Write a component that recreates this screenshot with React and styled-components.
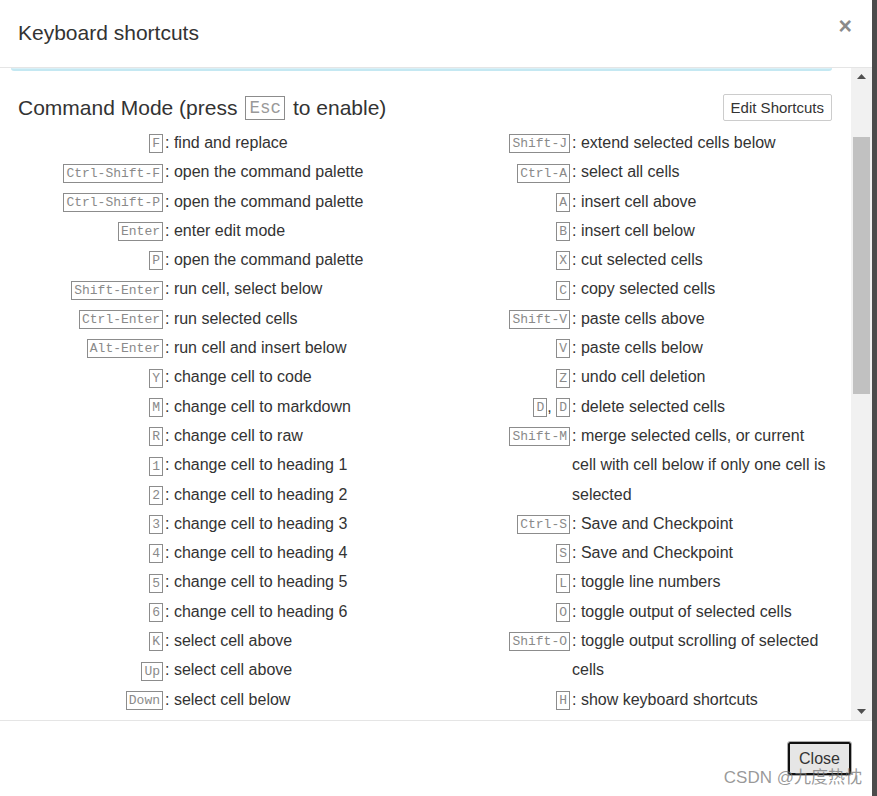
import React from 'react';
import styled, { createGlobalStyle } from 'styled-components';

const GlobalStyle = createGlobalStyle`
  *, *::before, *::after {
    box-sizing: border-box;
  }
  html, body {
    margin: 0;
    padding: 0;
    background: #4b4b4b;
  }
  body {
    font-family: "Liberation Sans", Arial, sans-serif;
    color: #333;
  }
`;

const Page = styled.div`
  width: 877px;
  height: 796px;
  display: flex;
  overflow: hidden;
`;

const Dialog = styled.div`
  width: 872px;
  height: 796px;
  background: #fff;
  display: flex;
  flex-direction: column;
`;

const Header = styled.div`
  height: 68px;
  border-bottom: 1px solid #e5e5e5;
  display: flex;
  align-items: center;
  justify-content: space-between;
  padding: 0 18px;
  flex: none;
`;

const Title = styled.h4`
  margin: 0 0 1px;
  font-size: 21px;
  font-weight: normal;
  color: #333;
`;

const CloseX = styled.span`
  font-size: 23px;
  font-weight: bold;
  color: #8a8a8a;
  margin-right: 2px;
  margin-top: -14px;
`;

const BodyRow = styled.div`
  flex: 1;
  display: flex;
  min-height: 0;
`;

const Content = styled.div`
  flex: 1;
  overflow: hidden;
  padding: 0 19px 0 18px;
`;

const AlertEdge = styled.div`
  height: 3px;
  margin: 0 0 0 -7px;
  background: #d9f0f7;
  border-bottom: 2px solid #c4e8f2;
  border-radius: 0 0 3px 3px;
`;

const ModeBar = styled.div`
  display: flex;
  align-items: center;
  justify-content: space-between;
  height: 27px;
  margin-top: 23px;
`;

const ModeTitle = styled.h4`
  margin: 0;
  font-size: 21px;
  font-weight: normal;
  color: #333;
  display: flex;
  align-items: center;
  gap: 8px;
`;

const EscKey = styled.kbd`
  display: inline-block;
  border: 1px solid #8c8c8c;
  padding: 0 3px;
  font-family: "Liberation Mono", "Courier New", monospace;
  font-size: 17.5px;
  line-height: 22px;
  color: #999;
`;

const EditButton = styled.button`
  height: 27px;
  padding: 0 7px;
  background: #fff;
  border: 1px solid #ccc;
  border-radius: 2px;
  font-family: "Liberation Sans", Arial, sans-serif;
  font-size: 15px;
  color: #333;
`;

const Columns = styled.div`
  display: grid;
  grid-template-columns: 407px 1fr;
  margin-top: 7px;
`;

const Column = styled.div`
  display: flex;
  flex-direction: column;
`;

const Line = styled.div`
  display: flex;
  font-size: 16px;
  line-height: 29.3px;
`;

const Keys = styled.span`
  width: 145px;
  flex: none;
  text-align: right;
  color: #333;
`;

const Kbd = styled.kbd`
  display: inline-block;
  border: 1px solid #8c8c8c;
  padding: 0 2px;
  font-family: "Liberation Mono", "Courier New", monospace;
  font-size: 13px;
  line-height: 17px;
  color: #8a8a8a;
  vertical-align: middle;
`;

const Descr = styled.span`
  flex: 1;
  padding-left: 2px;
`;

const Scrollbar = styled.div`
  width: 21px;
  flex: none;
  background: #f1f1f1;
  display: flex;
  flex-direction: column;
  align-items: center;
`;

const Arrow = styled.div`
  height: 17px;
  display: flex;
  align-items: center;
  justify-content: center;
  width: 100%;
`;

const Track = styled.div`
  flex: 1;
  width: 100%;
  display: flex;
  flex-direction: column;
  padding-top: 52px;
`;

const Thumb = styled.div`
  height: 257px;
  margin-left: 2px;
  width: 17px;
  background: #c1c1c1;
`;

const Footer = styled.div`
  position: relative;
  height: 76px;
  border-top: 1px solid #e5e5e5;
  display: flex;
  justify-content: flex-end;
  align-items: flex-start;
  padding: 20px 20px 0 0;
  flex: none;
`;

const CloseButton = styled.button`
  width: 65px;
  height: 35px;
  background: #e6e6e6;
  border: 1px solid #adadad;
  border-radius: 3px;
  box-shadow: inset 0 0 0 2px #111;
  font-family: "Liberation Sans", Arial, sans-serif;
  font-size: 16px;
  color: #333;
`;

const Watermark = styled.span`
  position: absolute;
  right: 10px;
  bottom: 8px;
  font-family: "Liberation Sans", "Noto Sans CJK SC", sans-serif;
  font-size: 17px;
  color: rgba(120, 120, 120, 0.75);
  pointer-events: none;
`;

const left = [
  [['F'], 'find and replace'],
  [['Ctrl-Shift-F'], 'open the command palette'],
  [['Ctrl-Shift-P'], 'open the command palette'],
  [['Enter'], 'enter edit mode'],
  [['P'], 'open the command palette'],
  [['Shift-Enter'], 'run cell, select below'],
  [['Ctrl-Enter'], 'run selected cells'],
  [['Alt-Enter'], 'run cell and insert below'],
  [['Y'], 'change cell to code'],
  [['M'], 'change cell to markdown'],
  [['R'], 'change cell to raw'],
  [['1'], 'change cell to heading 1'],
  [['2'], 'change cell to heading 2'],
  [['3'], 'change cell to heading 3'],
  [['4'], 'change cell to heading 4'],
  [['5'], 'change cell to heading 5'],
  [['6'], 'change cell to heading 6'],
  [['K'], 'select cell above'],
  [['Up'], 'select cell above'],
  [['Down'], 'select cell below'],
  [['J'], 'select cell below'],
  [['Shift-K'], 'extend selected cells above'],
];

const right = [
  [['Shift-J'], 'extend selected cells below'],
  [['Ctrl-A'], 'select all cells'],
  [['A'], 'insert cell above'],
  [['B'], 'insert cell below'],
  [['X'], 'cut selected cells'],
  [['C'], 'copy selected cells'],
  [['Shift-V'], 'paste cells above'],
  [['V'], 'paste cells below'],
  [['Z'], 'undo cell deletion'],
  [['D', 'D'], 'delete selected cells'],
  [['Shift-M'], 'merge selected cells, or current cell with cell below if only one cell is selected'],
  [['Ctrl-S'], 'Save and Checkpoint'],
  [['S'], 'Save and Checkpoint'],
  [['L'], 'toggle line numbers'],
  [['O'], 'toggle output of selected cells'],
  [['Shift-O'], 'toggle output scrolling of selected cells'],
  [['H'], 'show keyboard shortcuts'],
  [['I', 'I'], 'interrupt the kernel'],
  [['0', '0'], 'restart the kernel'],
];

const Shortcut = ({ keys, text }) => (
  <Line>
    <Keys>
      {keys.map((k, i) => (
        <React.Fragment key={i}>
          {i > 0 && ', '}
          <Kbd>{k}</Kbd>
        </React.Fragment>
      ))}
    </Keys>
    <Descr>: {text}</Descr>
  </Line>
);

const App = () => (
  <Page>
    <GlobalStyle />
    <Dialog>
      <Header>
        <Title>Keyboard shortcuts</Title>
        <CloseX>×</CloseX>
      </Header>
      <BodyRow>
        <Content>
          <AlertEdge />
          <ModeBar>
            <ModeTitle>
              <span>Command Mode (press</span>
              <EscKey>Esc</EscKey>
              <span>to enable)</span>
            </ModeTitle>
            <EditButton>Edit Shortcuts</EditButton>
          </ModeBar>
          <Columns>
            <Column>
              {left.map(([keys, text], i) => (
                <Shortcut key={i} keys={keys} text={text} />
              ))}
            </Column>
            <Column>
              {right.map(([keys, text], i) => (
                <Shortcut key={i} keys={keys} text={text} />
              ))}
            </Column>
          </Columns>
        </Content>
        <Scrollbar>
          <Arrow>
            <svg width="9" height="5" viewBox="0 0 9 5"><path d="M0 5 L4.5 0 L9 5 Z" fill="#505050" /></svg>
          </Arrow>
          <Track>
            <Thumb />
          </Track>
          <Arrow>
            <svg width="9" height="5" viewBox="0 0 9 5"><path d="M0 0 L4.5 5 L9 0 Z" fill="#505050" /></svg>
          </Arrow>
        </Scrollbar>
      </BodyRow>
      <Footer>
        <CloseButton>Close</CloseButton>
        <Watermark>CSDN @九度热忱</Watermark>
      </Footer>
    </Dialog>
  </Page>
);

export default App;
